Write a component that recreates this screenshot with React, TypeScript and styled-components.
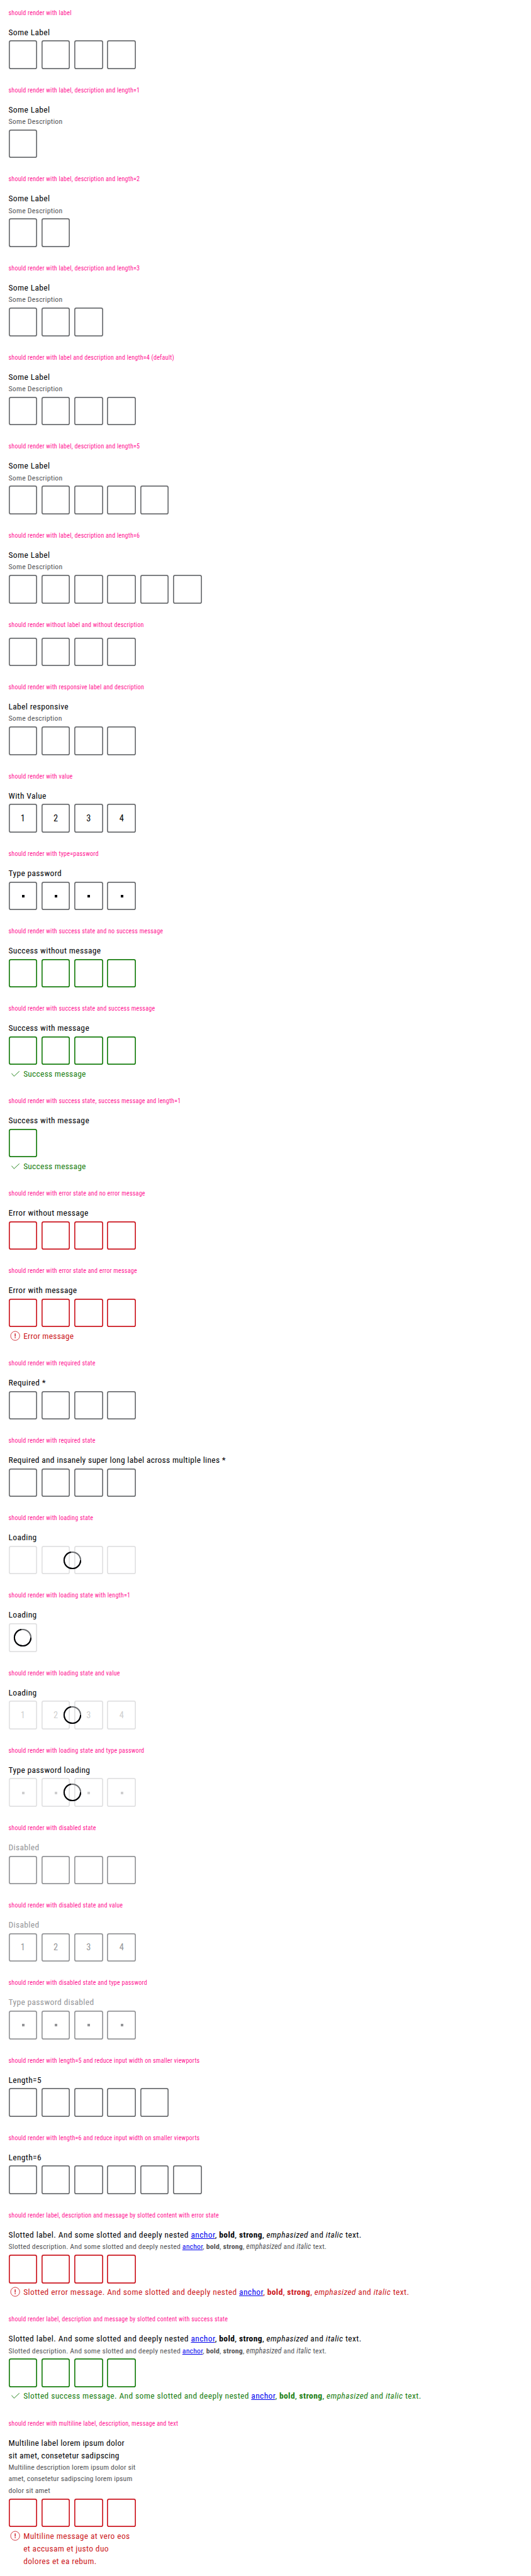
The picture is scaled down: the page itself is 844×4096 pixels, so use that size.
import React from 'react';
import styled, { createGlobalStyle } from 'styled-components';

const K = 4096 / 4854;
const px = (n: number) => `${(n * K).toFixed(3)}px`;

type Tone = 'none' | 'success' | 'error';
type Mode = 'normal' | 'loading' | 'disabled';

const toneColor: Record<Tone, string> = { none: '#6b6d70', success: '#197e10', error: '#cc1922' };

const GlobalStyle = createGlobalStyle`
  body {
    margin: 0;
    background: #fff;
    color: #010205;
    font-family: 'Roboto Condensed', Roboto, 'Liberation Sans', sans-serif;
  }
  a { color: #0000ee; }
`;

const Page = styled.main`
  display: flex;
  flex-direction: column;
  height: 4096px;
  overflow: hidden;
`;

const Section = styled.section`
  padding: 0 ${px(16)} ${px(16)};
`;

const Title = styled.p`
  margin: 0;
  padding: ${px(16)} 0;
  height: ${px(16)};
  line-height: ${px(16)};
  font-size: ${px(12)};
  letter-spacing: ${px(0.25)};
  white-space: nowrap;
  color: #ff1493;
`;

const Field = styled.div`
  display: flex;
  flex-direction: column;
  align-items: flex-start;
`;

const Label = styled.label<{ $mode: Mode; $tracking: number }>`
  font-size: ${px(16)};
  line-height: ${px(24)};
  letter-spacing: ${(p) => px(p.$tracking)};
  color: ${(p) => (p.$mode === 'disabled' ? '#949598' : '#010205')};
  white-space: pre-line;
`;

const Description = styled.span<{ $tracking: number }>`
  font-size: ${px(14)};
  line-height: ${px(21.87)};
  letter-spacing: ${(p) => px(p.$tracking)};
  color: #535457;
  white-space: pre-line;
`;

const Inputs = styled.div<{ $spaced: boolean }>`
  display: grid;
  grid-auto-flow: column;
  position: relative;
  gap: ${px(8)};
  margin-top: ${(p) => (p.$spaced ? px(4) : '0')};
`;

const Box = styled.span<{ $tone: Tone; $mode: Mode }>`
  display: grid;
  place-items: center;
  width: ${px(54)};
  height: ${px(54)};
  border-radius: ${px(4)};
  box-shadow: inset 0 0 0 ${px(2)} ${(p) => (p.$mode === 'normal' ? toneColor[p.$tone] : p.$mode === 'loading' ? '#e1e1e2' : '#949598')};
  color: ${(p) => (p.$mode === 'normal' ? '#010205' : p.$mode === 'loading' ? '#cfcfd0' : '#949598')};
  font-size: ${px(17)};
`;

const Dot = styled.i`
  width: ${px(5)};
  height: ${px(4.5)};
  margin: ${px(1)} 0 0 ${px(1)};
  background: currentColor;
`;

const SpinnerSvg = styled.svg`
  position: absolute;
  top: 50%;
  left: 50%;
  width: ${px(36)};
  height: ${px(36)};
  transform: translate(-50%, -50%);
`;

const Message = styled.div<{ $tone: Tone; $tracking: number }>`
  display: flex;
  gap: ${px(4)};
  padding-top: ${px(4)};
  font-size: ${px(16)};
  line-height: ${px(24)};
  letter-spacing: ${(p) => px(p.$tracking)};
  color: ${(p) => toneColor[p.$tone]};
  white-space: pre-line;
`;

const IconSvg = styled.svg`
  flex: none;
  width: ${px(24)};
  height: ${px(24)};
`;

const Spinner = () => (
  <SpinnerSvg viewBox="0 0 36 36" fill="none" strokeWidth="2.4">
    <circle cx="18" cy="18" r="15.5" stroke="#6b6d70" />
    <path d="M33.5 18A15.5 15.5 0 1 1 15.5 2.7" stroke="#010205" />
  </SpinnerSvg>
);

const StateIcon = ({ tone }: { tone: Tone }) =>
  tone === 'success' ? (
    <IconSvg viewBox="0 0 24 24" fill="none" stroke="currentColor" strokeWidth="1.1">
      <path d="M5.2 11.5 9.9 16.9 19.9 7.5" />
    </IconSvg>
  ) : (
    <IconSvg viewBox="0 0 24 24" fill="none" stroke="currentColor" strokeWidth="1">
      <circle cx="12" cy="12" r="8.5" />
      <path d="M12 7.5v5.7" strokeWidth="1.7" />
      <path d="M12 14.5v1.9" strokeWidth="1.7" />
    </IconSvg>
  );

const Rich = ({ lead }: { lead: string }) => (
  <span>
    {lead} And some slotted and deeply nested <a href="#">anchor</a>, <b>bold</b>, <strong>strong</strong>,{' '}
    <em>emphasized</em> and <i>italic</i> text.
  </span>
);

interface Case {
  title: string;
  label?: React.ReactNode;
  description?: React.ReactNode;
  length?: number;
  value?: string;
  password?: boolean;
  tone?: Tone;
  mode?: Mode;
  message?: React.ReactNode;
}

const cases: Case[] = [
  { title: 'should render with label', label: 'Some Label' },
  { title: 'should render with label, description and length=1', label: 'Some Label', description: 'Some Description', length: 1 },
  { title: 'should render with label, description and length=2', label: 'Some Label', description: 'Some Description', length: 2 },
  { title: 'should render with label, description and length=3', label: 'Some Label', description: 'Some Description', length: 3 },
  { title: 'should render with label and description and length=4 (default)', label: 'Some Label', description: 'Some Description' },
  { title: 'should render with label, description and length=5', label: 'Some Label', description: 'Some Description', length: 5 },
  { title: 'should render with label, description and length=6', label: 'Some Label', description: 'Some Description', length: 6 },
  { title: 'should render without label and without description' },
  { title: 'should render with responsive label and description', label: 'Label responsive', description: 'Some description' },
  { title: 'should render with value', label: 'With Value', value: '1234' },
  { title: 'should render with type=password', label: 'Type password', password: true },
  { title: 'should render with success state and no success message', label: 'Success without message', tone: 'success' },
  { title: 'should render with success state and success message', label: 'Success with message', tone: 'success', message: 'Success message' },
  { title: 'should render with success state, success message and length=1', label: 'Success with message', tone: 'success', message: 'Success message', length: 1 },
  { title: 'should render with error state and no error message', label: 'Error without message', tone: 'error' },
  { title: 'should render with error state and error message', label: 'Error with message', tone: 'error', message: 'Error message' },
  { title: 'should render with required state', label: 'Required *' },
  { title: 'should render with required state', label: 'Required and insanely super long label across multiple lines *' },
  { title: 'should render with loading state', label: 'Loading', mode: 'loading' },
  { title: 'should render with loading state with length=1', label: 'Loading', mode: 'loading', length: 1 },
  { title: 'should render with loading state and value', label: 'Loading', mode: 'loading', value: '1234' },
  { title: 'should render with loading state and type password', label: 'Type password loading', mode: 'loading', password: true },
  { title: 'should render with disabled state', label: 'Disabled', mode: 'disabled' },
  { title: 'should render with disabled state and value', label: 'Disabled', mode: 'disabled', value: '1234' },
  { title: 'should render with disabled state and type password', label: 'Type password disabled', mode: 'disabled', password: true },
  { title: 'should render with length=5 and reduce input width on smaller viewports', label: 'Length=5', length: 5 },
  { title: 'should render with length=6 and reduce input width on smaller viewports', label: 'Length=6', length: 6 },
  {
    title: 'should render label, description and message by slotted content with error state',
    label: <Rich lead="Slotted label." />,
    description: <Rich lead="Slotted description." />,
    tone: 'error',
    message: <Rich lead="Slotted error message." />,
  },
  {
    title: 'should render label, description and message by slotted content with success state',
    label: <Rich lead="Slotted label." />,
    description: <Rich lead="Slotted description." />,
    tone: 'success',
    message: <Rich lead="Slotted success message." />,
  },
  {
    title: 'should render with multiline label, description, message and text',
    label: 'Multiline label lorem ipsum dolor\nsit amet, consetetur sadipscing',
    description: 'Multiline description lorem ipsum dolor sit\namet, consetetur sadipscing lorem ipsum\ndolor sit amet',
    tone: 'error',
    message: 'Multiline message at vero eos\net accusam et justo duo\ndolores et ea rebum.',
  },
];

// Letter spacing for short single-line text, longer plain text and rich content.
const tracking = (text: React.ReactNode, short: number, long: number, rich: number) =>
  typeof text !== 'string' ? rich : text.length > 30 ? long : short;

const PinCode = ({ label, description, length = 4, value = '', password, tone = 'none', mode = 'normal', message }: Case) => (
  <Field>
    {label && <Label $mode={mode} $tracking={tracking(label, 0.42, 0.36, 0.475)}>{label}</Label>}
    {description && <Description $tracking={tracking(description, 0.28, 0.15, 0.228)}>{description}</Description>}
    <Inputs $spaced={Boolean(label || description)}>
      {Array.from({ length }, (_, i) => (
        <Box key={i} $tone={tone} $mode={mode}>
          {password ? <Dot /> : value[i]}
        </Box>
      ))}
      {mode === 'loading' && <Spinner />}
    </Inputs>
    {message && (
      <Message $tone={tone} $tracking={tracking(message, 0.28, 0.42, 0.45)}>
        <StateIcon tone={tone} />
        <span>{message}</span>
      </Message>
    )}
  </Field>
);

export default function App() {
  return (
    <>
      <GlobalStyle />
      <Page>
        {cases.map((c, i) => (
          <Section key={i}>
            <Title>{c.title}</Title>
            <PinCode {...c} />
          </Section>
        ))}
      </Page>
    </>
  );
}
